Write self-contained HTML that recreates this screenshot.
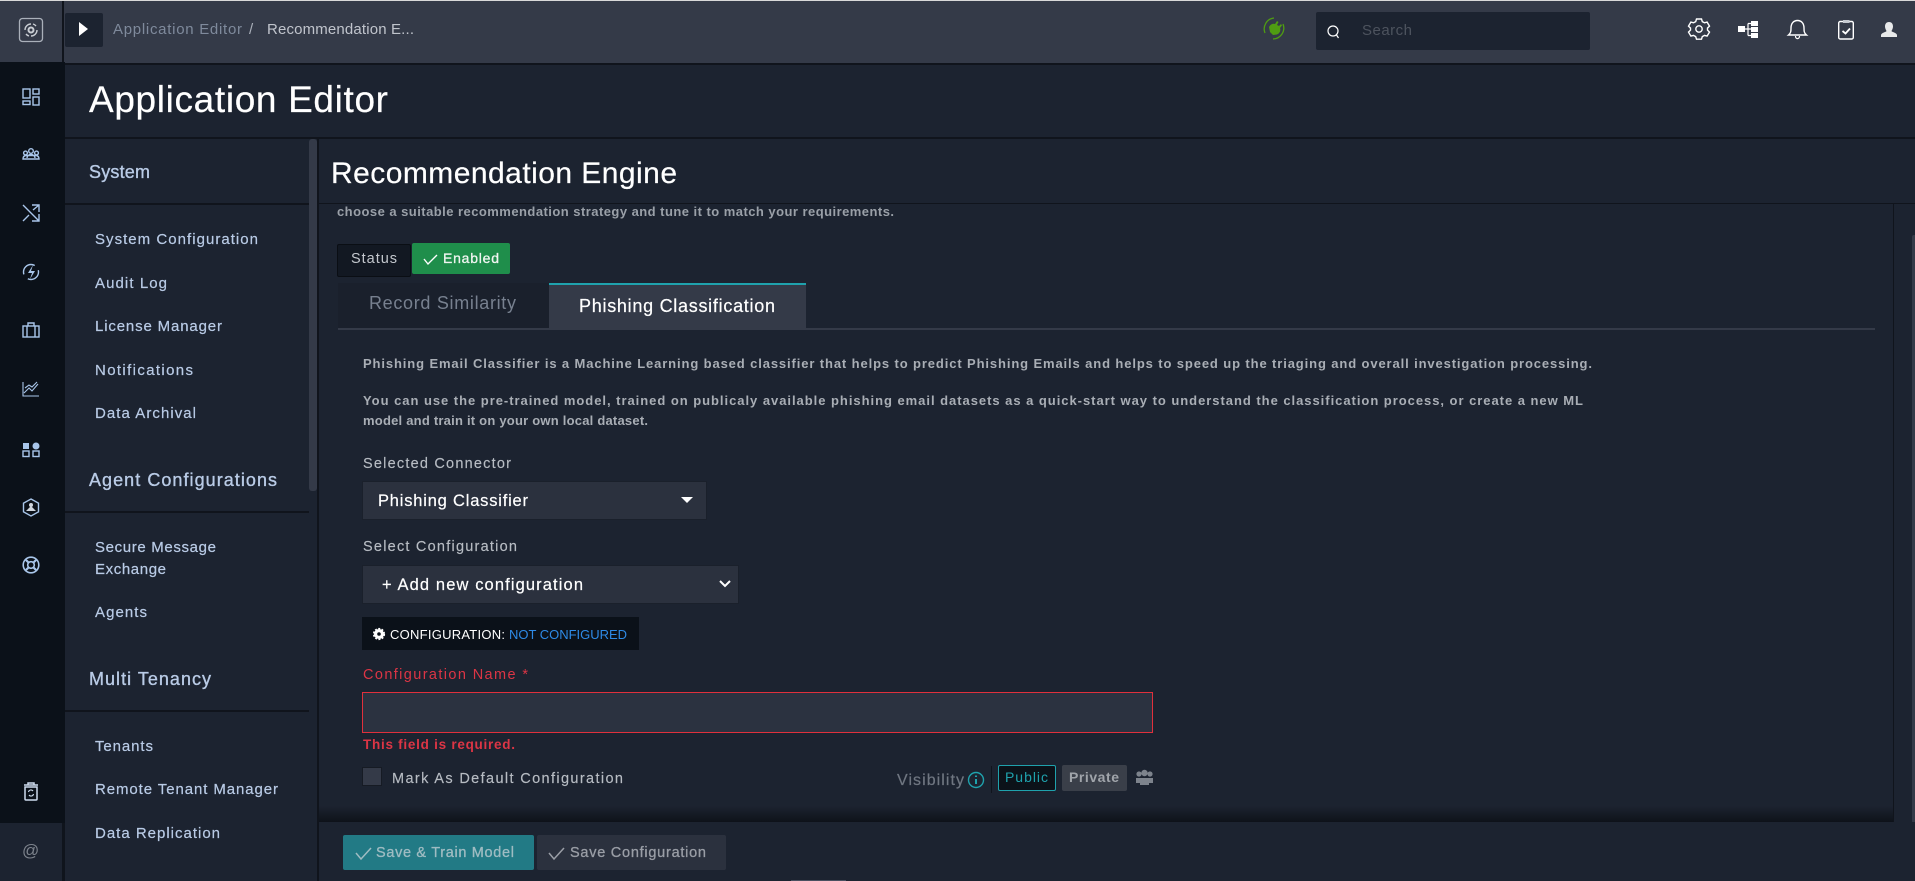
<!DOCTYPE html>
<html lang="en"><head><meta charset="utf-8"><title>Application Editor</title>
<style>
html,body{margin:0;padding:0;width:1915px;height:881px;overflow:hidden;background:#1c2330}
div{position:absolute;box-sizing:border-box}
svg{position:absolute;left:0;top:0}
text{font-family:"Liberation Sans",sans-serif;white-space:pre}
.nav{font-size:15px;fill:#b9cbe6;stroke:#b9cbe6;stroke-width:.2px}
.hd{font-size:18px;fill:#b9cbe6;stroke:#b9cbe6;stroke-width:.35px}
.p{font-size:13px;font-weight:bold;fill:#a9aeb5}
.lb{font-size:14.5px;fill:#b7bcc3;stroke:#b7bcc3;stroke-width:.15px}
.r{fill:none;stroke:#a9c6ea;stroke-width:1.4}
</style></head><body>
<div style="left:0;top:0;width:1915px;height:1px;background:#d9d9d9"></div>
<div style="left:0;top:1px;width:1915px;height:62px;background:#343a48"></div>
<div style="left:0;top:63px;width:1915px;height:2px;background:#10141c"></div>
<div style="left:62px;top:1px;width:2px;height:62px;background:#10141c"></div>
<div style="left:65px;top:13px;width:38px;height:34px;background:#1c2330;border-radius:2px"></div>
<div style="left:1316px;top:12px;width:274px;height:38px;background:#1c2330;border-radius:2px"></div>
<div style="left:0;top:62px;width:65px;height:761px;background:#0b1119"></div>
<div style="left:0;top:823px;width:62px;height:58px;background:#1c2330"></div>
<div style="left:62px;top:823px;width:3px;height:58px;background:#0f141c"></div>
<div style="left:65px;top:137px;width:1850px;height:2px;background:#10141c"></div>
<div style="left:65px;top:203px;width:244px;height:2px;background:#10141c"></div>
<div style="left:65px;top:511px;width:244px;height:2px;background:#10141c"></div>
<div style="left:65px;top:710px;width:244px;height:2px;background:#10141c"></div>
<div style="left:309px;top:139px;width:8px;height:742px;background:#1c2330"></div>
<div style="left:309px;top:139px;width:8px;height:352px;background:#343a48;border-radius:3px"></div>
<div style="left:317px;top:139px;width:2px;height:742px;background:#10141c"></div>
<div style="left:319px;top:203px;width:1596px;height:1px;background:#10141c"></div>
<div style="left:1893px;top:204px;width:1px;height:620px;background:#10141c"></div>
<div style="left:1912px;top:235px;width:3px;height:588px;background:#343a48;border-radius:2px 0 0 2px"></div>
<div style="left:337px;top:244px;width:74px;height:33px;background:#121822;border:1px solid #0a0e14;border-radius:2px"></div>
<div style="left:412px;top:243px;width:98px;height:31px;background:#1f8e4b;border-radius:2px"></div>
<div style="left:338px;top:283px;width:211px;height:46px;background:#1a202c"></div>
<div style="left:338px;top:328px;width:1537px;height:2px;background:#343a48"></div>
<div style="left:549px;top:283px;width:257px;height:46px;background:#343a48;border-top:2px solid #1fa2ad"></div>
<div style="left:362px;top:481px;width:345px;height:39px;background:#2b313e;border:1px solid #1a202b"></div>
<div style="left:362px;top:565px;width:377px;height:39px;background:#2b313e;border:1px solid #1a202b"></div>
<div style="left:362px;top:617px;width:277px;height:33px;background:#0b1119"></div>
<div style="left:362px;top:692px;width:791px;height:41px;background:#2b3240;border:1px solid #e0303c"></div>
<div style="left:362px;top:767px;width:20px;height:19px;background:#343a48;border:1px solid #161b24"></div>
<div style="left:991px;top:766px;width:1px;height:27px;background:#10141c"></div>
<div style="left:998px;top:765px;width:58px;height:26px;background:#0c1219;border:1px solid #1fa2ad;border-radius:2px"></div>
<div style="left:1062px;top:765px;width:65px;height:26px;background:#3a3f49;border-radius:2px"></div>
<div style="left:319px;top:806px;width:1574px;height:17px;background:linear-gradient(#1c233000,#0d1118)"></div>
<div style="left:319px;top:822px;width:1596px;height:59px;background:#1c2330"></div>
<div style="left:343px;top:835px;width:191px;height:35px;background:#227a85;border-radius:2px"></div>
<div style="left:537px;top:835px;width:189px;height:35px;background:#2b313e;border-radius:2px"></div>
<div style="left:791px;top:880px;width:55px;height:1px;background:#4a5060"></div>

<svg width="1915" height="881" viewBox="0 0 1915 881">
<!-- top bar text -->
<text x="113" y="34" font-size="15" fill="#7f8a9c" textLength="129">Application Editor</text>
<text x="249" y="34" font-size="15" fill="#aab0ba">/</text>
<text x="267" y="34" font-size="15" fill="#c0c4cc" textLength="147">Recommendation E...</text>
<text x="1362" y="35" font-size="15" fill="#4d535e" textLength="50">Search</text>
<!-- headings -->
<text x="89" y="112" font-size="37" fill="#fff" stroke="#fff" stroke-width=".2" textLength="299">Application Editor</text>
<text x="331" y="183" font-size="30" fill="#fff" stroke="#fff" stroke-width=".2" textLength="346">Recommendation Engine</text>
<!-- sidebar -->
<text class="hd" x="89" y="178" textLength="61">System</text>
<text class="nav" x="95" y="244" textLength="163">System Configuration</text>
<text class="nav" x="95" y="288" textLength="72">Audit Log</text>
<text class="nav" x="95" y="331" textLength="127">License Manager</text>
<text class="nav" x="95" y="375" textLength="98">Notifications</text>
<text class="nav" x="95" y="418" textLength="101">Data Archival</text>
<text class="hd" x="89" y="486" textLength="188">Agent Configurations</text>
<text class="nav" x="95" y="552" textLength="121">Secure Message</text>
<text class="nav" x="95" y="574" textLength="71">Exchange</text>
<text class="nav" x="95" y="617" textLength="52">Agents</text>
<text class="hd" x="89" y="685" textLength="122">Multi Tenancy</text>
<text class="nav" x="95" y="751" textLength="58">Tenants</text>
<text class="nav" x="95" y="794" textLength="183">Remote Tenant Manager</text>
<text class="nav" x="95" y="838" textLength="125">Data Replication</text>
<!-- content -->
<text class="p" x="337" y="216" textLength="557" style="fill:#9aa0a8">choose a suitable recommendation strategy and tune it to match your requirements.</text>
<text x="351" y="263" font-size="14.5" fill="#c3c7cd" textLength="46">Status</text>
<text x="443" y="263" font-size="14" fill="#f0f5f1" stroke="#f0f5f1" stroke-width=".3" textLength="56">Enabled</text>
<text x="369" y="309" font-size="18" fill="#77808f" textLength="147">Record Similarity</text>
<text x="579" y="312" font-size="18" fill="#fff" stroke="#fff" stroke-width=".2" textLength="196">Phishing Classification</text>
<text class="p" x="363" y="368" textLength="1229">Phishing Email Classifier is a Machine Learning based classifier that helps to predict Phishing Emails and helps to speed up the triaging and overall investigation processing.</text>
<text class="p" x="363" y="405" textLength="1220">You can use the pre-trained model, trained on publicaly available phishing email datasets as a quick-start way to understand the classification process, or create a new ML</text>
<text class="p" x="363" y="425" textLength="285">model and train it on your own local dataset.</text>
<text class="lb" x="363" y="468" textLength="148">Selected Connector</text>
<text x="378" y="506" font-size="16.5" fill="#fff" stroke="#fff" stroke-width=".2" textLength="150">Phishing Classifier</text>
<text class="lb" x="363" y="551" textLength="154">Select Configuration</text>
<text x="382" y="590" font-size="16.5" fill="#fff" stroke="#fff" stroke-width=".2" textLength="201">+ Add new configuration</text>
<text x="390" y="639" font-size="13" fill="#fff" textLength="115">CONFIGURATION:</text>
<text x="509" y="639" font-size="13" fill="#2e8ae6" textLength="118">NOT CONFIGURED</text>
<text x="363" y="679" font-size="14.5" fill="#dc3545" textLength="165">Configuration Name *</text>
<text x="363" y="749" font-size="13.5" font-weight="bold" fill="#dc3545" textLength="152">This field is required.</text>
<text class="lb" x="392" y="783" textLength="231">Mark As Default Configuration</text>
<text x="897" y="785" font-size="16" fill="#6f7681" stroke="#6f7681" stroke-width=".2" textLength="67">Visibility</text>
<text x="1005" y="782" font-size="14" fill="#1fa2ad" textLength="43">Public</text>
<text x="1069" y="782" font-size="14" font-weight="bold" fill="#a0a4aa" textLength="50">Private</text>
<text x="376" y="857" font-size="14.5" fill="#9fbcc2" stroke="#9fbcc2" stroke-width=".3" textLength="138">Save &amp; Train Model</text>
<text x="570" y="857" font-size="14.5" fill="#9a9ea6" stroke="#9a9ea6" stroke-width=".3" textLength="136">Save Configuration</text>
<text x="22" y="856" font-size="17" fill="#7d838c">@</text>

<!-- small glyphs -->
<path d="M79 22 L88 29 L79 36Z" fill="#fff"/>
<path d="M681 497h12l-6 6z" fill="#fff"/>
<path d="M720 581l5 5 5-5" fill="none" stroke="#fff" stroke-width="2"/>
<path d="M424 259l4 5 9-9" fill="none" stroke="#fff" stroke-width="1.4"/>
<path d="M356 853l5 6 10-11" fill="none" stroke="#9fbcc2" stroke-width="1.5"/>
<path d="M549 853l5 6 10-11" fill="none" stroke="#9a9ea6" stroke-width="1.5"/>
<circle cx="379" cy="634" r="3.4" fill="none" stroke="#fff" stroke-width="3.2"/>
<circle cx="379" cy="634" r="5.4" fill="none" stroke="#fff" stroke-width="1.4" stroke-dasharray="2 1.5"/>
<circle cx="976" cy="780" r="7.5" fill="none" stroke="#1fa2ad" stroke-width="1.4"/>
<path d="M976 779v5M976 775.500v1.500" stroke="#1fa2ad" stroke-width="2"/>
<g fill="#7d838c"><circle cx="1139" cy="774" r="2.600"/><circle cx="1150" cy="774" r="2.600"/><circle cx="1144.500" cy="773" r="3.200"/><path d="M1136 778h6v5h-6zM1147 778h6v5h-6zM1140 778h9v7h-9z"/></g>

<!-- logo -->
<rect x="19.500" y="18.500" width="23" height="23" rx="3" fill="none" stroke="#aab0ba" stroke-width="1.300"/>
<circle cx="31" cy="30" r="2.500" fill="none" stroke="#c9cdd3" stroke-width="2"/>
<path d="M25 30a6 6 0 0 1 6-6M37 30a6 6 0 0 1-6 6M26 34a6 6 0 0 0 3 2M36 26a6 6 0 0 0-3-2" fill="none" stroke="#c9cdd3" stroke-width="1.400"/>

<!-- plug status -->
<g transform="translate(7 0)">
<path d="M1258 33a11 11 0 0 1 9-15M1276 24a11 11 0 0 1-10 15" fill="none" stroke="#4f9c12" stroke-width="1.300"/>
<path d="M1262 27a5 5 0 0 1 6-3l2-3 1.500 1-1.500 3 2 1 2-2 1 1.500-2 2.500a5 5 0 0 1-3 6.500l-4 .5-3-3z" fill="#4f9c12"/>
</g>

<!-- search -->
<circle cx="1333" cy="31" r="5" fill="none" stroke="#fff" stroke-width="1.200"/>
<path d="M1336.500 35l2 3" stroke="#fff" stroke-width="1.200"/>

<!-- gear -->
<g transform="translate(103.500 0)">
<circle cx="1595.500" cy="29" r="3.200" fill="none" stroke="#fff" stroke-width="1.400"/>
<path fill="none" stroke="#fff" stroke-width="1.400" d="M1593 20h5l.8 2.600 2.200 1.200 2.600-.7 2.400 4-2 2 0 2 2 2-2.400 4-2.600-.7-2.200 1.200-.8 2.600h-5l-.8-2.600-2.200-1.200-2.600.7-2.400-4 2-2 0-2-2-2 2.400-4 2.600.7 2.200-1.200z" transform="translate(0 -1)"/>
</g>
<!-- hierarchy -->
<g fill="#fff"><rect x="1738" y="26" width="7" height="6"/><rect x="1751" y="21" width="7" height="5"/><rect x="1751" y="27" width="7" height="5"/><rect x="1751" y="33" width="7" height="5"/></g>
<path d="M1745 29h6M1748 23.500v12M1748 23.500h3M1748 35.500h3" fill="none" stroke="#fff" stroke-width="1.200"/>
<!-- bell -->
<path d="M1788.500 35c2.500-2 2.500-4 2.500-7 0-4.500 2.500-7.500 6.500-7.500s6.500 3 6.500 7.500c0 3 0 5 2.500 7z" fill="none" stroke="#fff" stroke-width="1.400"/>
<path d="M1795.500 36c0 3.500 4 3.500 4 0" fill="none" stroke="#fff" stroke-width="1.200"/>
<!-- clipboard -->
<rect x="1838.700" y="21.500" width="14.600" height="17.500" rx="1.500" fill="none" stroke="#fff" stroke-width="1.400"/>
<rect x="1843" y="20" width="6.500" height="3" fill="#c5c9d0"/>
<path d="M1842.500 31l3 2.500 4.500-5" fill="none" stroke="#fff" stroke-width="1.800"/>
<!-- user -->
<path d="M1889 22c2.800 0 4 2 4 4.500 0 2-1 3.500-1.500 4.500 0 1 5 1.500 5.500 4v2h-16v-2c.5-2.500 5.500-3 5.500-4-.5-1-1.500-2.500-1.500-4.500 0-2.500 1.200-4.500 4-4.500z" fill="#e8e9ea"/>

<!-- rail icons -->
<g class="r">
<g transform="translate(0 1)"><rect x="23" y="88" width="7" height="9"/><rect x="33" y="88" width="6" height="5"/><rect x="23" y="100" width="7" height="3.500"/><rect x="33" y="96" width="6" height="8"/></g>
<g transform="translate(0 3)"><circle cx="31" cy="148" r="2.300"/><circle cx="25.500" cy="150" r="1.900"/><circle cx="36.500" cy="150" r="1.900"/><path d="M23 156c0-3 2-3.500 3.500-3.500h9c1.500 0 3.500.5 3.500 3.500zM27 155c0-2 2-3.500 4-3.500s4 1.500 4 3.500"/></g>
<g transform="translate(0 5)"><path d="M23 200l16 16M23 216l6-6M33 205l6-5M32 200h7v7M39 209v7h-7"/></g>
<g transform="translate(0 6)"><circle cx="31" cy="266" r="7.500" stroke-dasharray="18 6 18 6" stroke-dashoffset="3"/><path d="M33 259l-5 8h4l-2 6 5-8h-4z" fill="#a9c6ea" stroke="none"/></g>
<g transform="translate(0 9)"><rect x="23" y="317" width="16" height="11"/><path d="M27 328v-11M35 328v-11M28 317v-3h6v3"/></g>
<g transform="translate(0 10)"><path d="M23 372v14h16M24 383l5-5 3 3 6-7M25 378l4-3 3 2 5-5" stroke-width="1.100"/></g>
<g transform="translate(0 12)"><rect x="23" y="431" width="6" height="6" fill="#a9c6ea" stroke="none"/><circle cx="36" cy="434" r="3.500" fill="#a9c6ea" stroke="none"/><rect x="23" y="439" width="6" height="5.500"/><rect x="33" y="439" width="6" height="5.500"/></g>
<path d="M31 499l7.500 4.200v8.600L31 516l-7.500-4.200v-8.600z"/><circle cx="31" cy="505" r="2" fill="#cfd5de" stroke="none"/><path d="M26 511l5-5 5 5z" fill="#cfd5de" stroke="none"/>
<circle cx="31" cy="565" r="7.800" stroke-width="1.600"/><circle cx="31" cy="565" r="3.300" stroke-width="1.600"/><path d="M26 560l3 3M36 560l-3 3M26 570l3-3M36 570l-3-3" stroke-width="2.200"/>
</g>
<path d="M25 787h12v12a1 1 0 0 1-1 1H26a1 1 0 0 1-1-1zM24 785h14M28 785v-2h6v2" fill="none" stroke="#d0def0" stroke-width="1.500"/>
<path d="M28.500 792a2.500 2.500 0 0 1 4.500-1M33.500 794a2.500 2.500 0 0 1-4.500 1" fill="none" stroke="#d0def0" stroke-width="1.100"/>
</svg>
</body></html>
